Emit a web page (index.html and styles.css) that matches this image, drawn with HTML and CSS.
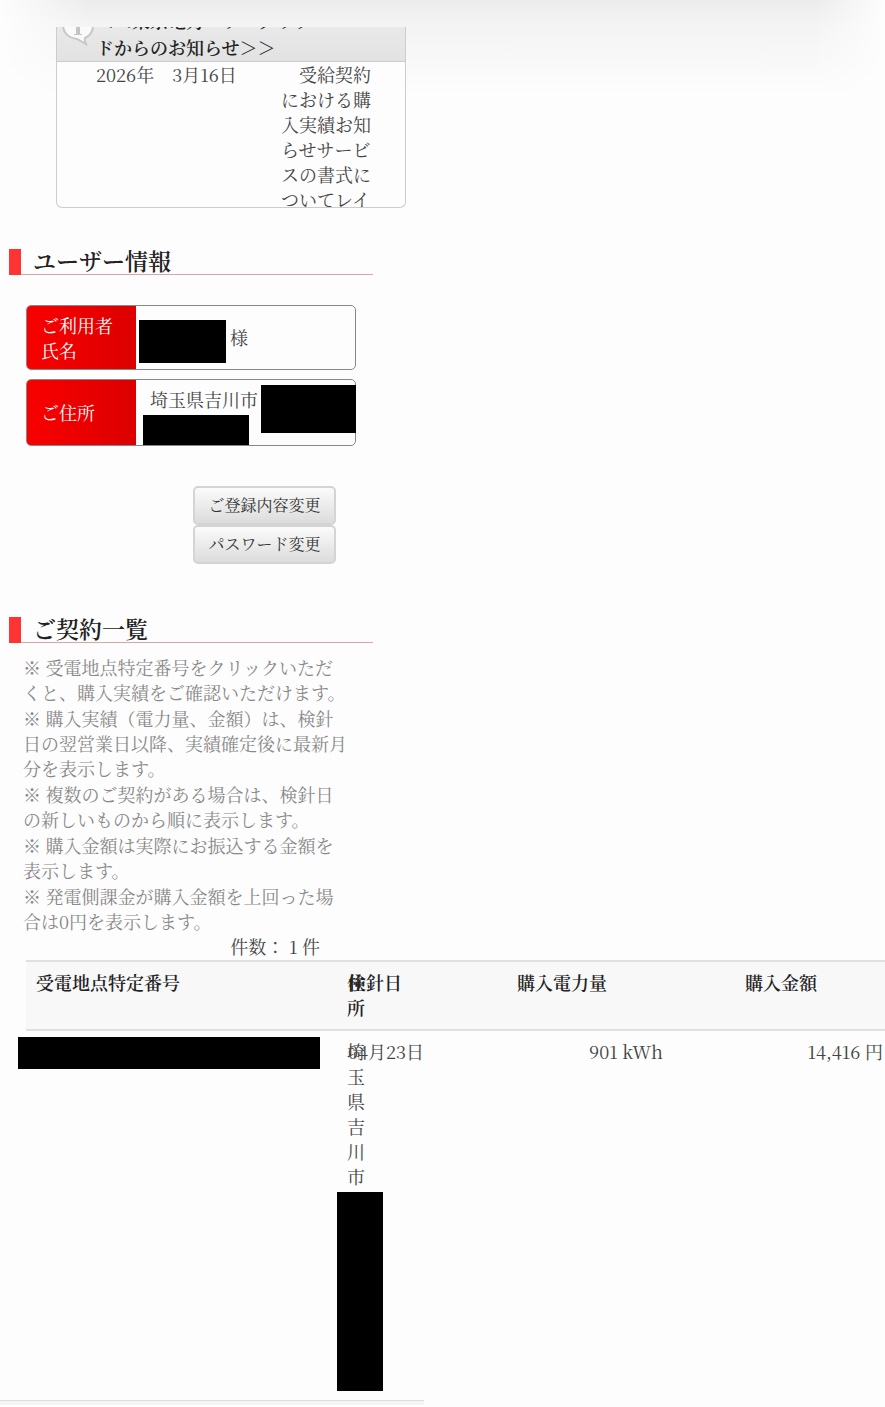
FILE: index.html
```html
<!DOCTYPE html>
<html lang="ja">
<head>
    <meta charset="UTF-8">
    <meta name="viewport" content="width=device-width, initial-scale=1.0">
    <title>購入実績お知らせサービス</title>
    <link rel="stylesheet" href="styles.css">
</head>
<body>
    <main>
        <!-- お知らせ -->
        <section class="notice">
            <div class="notice-head">
                <svg class="notice-icon" width="32" height="40" viewBox="0 0 32 40" aria-hidden="true">
                    <path d="M16 1C8 1 1 8 1 19c0 8 6 13 14 14 3 1 6 4 9 5-1-2-2-4-1-6 5-2 8-7 8-13C31 8 24 1 16 1z" fill="#fafafa" stroke="#c8c8c8" stroke-width="2"/>
                    <path d="M12 15h6v13h2v1h-8v-1h2V17h-2z" fill="#c4c4c4"/>
                    <circle cx="16" cy="10" r="2" fill="#c4c4c4"/>
                </svg>
                <h2>＜＜東京電力パワーグリッ<br>ドからのお知らせ＞＞</h2>
            </div>
            <div class="notice-body">
                <time>2026年　3月16日</time>
                <p>　受給契約における購入実績お知らせサービスの書式についてレイ</p>
            </div>
        </section>

        <!-- ユーザー情報 -->
        <section class="user">
            <h1>ユーザー情報</h1>
            <dl class="user-list">
                <div class="user-row">
                    <dt>ご利用者<br>氏名</dt>
                    <dd class="name"><span class="mask mask-name"></span>様</dd>
                </div>
                <div class="user-row">
                    <dt>ご住所</dt>
                    <dd class="address">埼玉県吉川市<span class="mask mask-town"></span><span class="mask mask-street"></span></dd>
                </div>
            </dl>
            <div class="buttons">
                <button type="button">ご登録内容変更</button>
                <button type="button">パスワード変更</button>
            </div>
        </section>

        <!-- ご契約一覧 -->
        <section class="contracts">
            <h1>ご契約一覧</h1>
            <div class="notes">
                <p>※ 受電地点特定番号をクリックいただ<br>くと、購入実績をご確認いただけます。</p>
                <p>※ 購入実績（電力量、金額）は、検針<br>日の翌営業日以降、実績確定後に最新月<br>分を表示します。</p>
                <p>※ 複数のご契約がある場合は、検針日<br>の新しいものから順に表示します。</p>
                <p>※ 購入金額は実際にお振込する金額を<br>表示します。</p>
                <p>※ 発電側課金が購入金額を上回った場<br>合は0円を表示します。</p>
            </div>
            <p class="count">件数： 1 件</p>
        </section>

        <table class="list">
            <colgroup>
                <col class="col-id">
                <col class="col-place">
                <col class="col-date">
                <col class="col-power">
                <col>
            </colgroup>
            <thead>
                <tr>
                    <th>受電地点特定番号</th>
                    <th class="place"><div>住所</div></th>
                    <th>検針日</th>
                    <th>購入電力量</th>
                    <th>購入金額</th>
                </tr>
            </thead>
            <tbody>
                <tr>
                    <td class="id"><span class="mask mask-id"></span></td>
                    <td class="place"><div>埼玉県吉川市</div><span class="mask mask-place"></span></td>
                    <td>04月23日</td>
                    <td class="power">901 kWh</td>
                    <td class="price">14,416 円</td>
                </tr>
            </tbody>
        </table>
    </main>
    <footer></footer>
</body>
</html>
```
FILE: styles.css
```css
* {
    box-sizing: border-box;
}

body {
    margin: 0;
    padding-top: 27px;
    font-family: "Noto Serif CJK JP", "DejaVu Serif Condensed", "Noto Sans CJK JP", serif;
    font-size: 18px;
    line-height: 25px;
    color: #444;
    overflow-x: hidden;
    background-color: #fdfdfd;
    /* 画面上部の影 */
    background-image:
        linear-gradient(to right, #fdfdfd, transparent 90px, transparent calc(100% - 70px), #fdfdfd),
        linear-gradient(to bottom, #ececec, #f4f4f4 27px, #fdfdfd 95px);
    background-repeat: no-repeat;
}

h1, h2, p, dl, dd {
    margin: 0;
}

.mask {
    display: block;
    background: #000;
}

/* お知らせ */
.notice {
    width: 350px;
    margin-left: 56px;
    border: 1px solid #ccc;
    border-top: none;
    border-radius: 0 0 6px 6px;
    background: #fdfdfd;
}

.notice-head {
    display: flex;
    align-items: flex-end;
    gap: 2px;
    height: 35px;
    padding-left: 5px;
    overflow: hidden;
    background: linear-gradient(#e9e9e9, #e2e2e2);
    border-bottom: 1px solid #ccc;
}

.notice-icon {
    flex: none;
    margin-bottom: 15px;
}

.notice-head h2 {
    font-size: 18px;
    font-weight: 600;
    line-height: 27px;
    white-space: nowrap;
    color: #222;
}

.notice-body {
    display: flex;
    justify-content: space-between;
    height: 145px;
    padding: 0 32px 0 39px;
    overflow: hidden;
}

.notice-body p {
    width: 92px;
    word-break: break-all;
}

/* 見出し */
h1 {
    display: flex;
    width: 364px;
    margin-left: 9px;
    border-bottom: 1px solid #d9a5a5;
    font-size: 23px;
    font-weight: 600;
    line-height: 24px;
    color: #222;
}

h1::before {
    content: "";
    width: 12px;
    height: 26px;
    margin-right: 12px;
    margin-bottom: -1px;
    background: #f33;
}

.user {
    margin-top: 41px;
}

.user-list {
    display: flex;
    flex-direction: column;
    gap: 9px;
    width: 330px;
    margin: 30px 0 0 26px;
}

.user-row {
    display: flex;
    min-height: 65px;
    border: 1px solid #888;
    border-radius: 5px;
}

.user-row dt {
    display: flex;
    align-items: center;
    width: 109px;
    padding-left: 14px;
    border-radius: 4px 0 0 4px;
    background: linear-gradient(to right, #f90000, #dc0000);
    color: #fff;
}

.user-row dd {
    flex: 1;
}

.name {
    display: flex;
    align-items: center;
    gap: 4px;
    padding-left: 3px;
}

.mask-name {
    width: 87px;
    height: 43px;
    margin-top: 7px;
}

.address {
    position: relative;
    padding: 7px 0 33px 14px;
}

.mask-town,
.mask-street {
    position: absolute;
}

.mask-town {
    top: 5px;
    right: -1px;
    width: 95px;
    height: 48px;
}

.mask-street {
    left: 7px;
    bottom: 0;
    width: 106px;
    height: 30px;
}

.buttons {
    display: flex;
    flex-direction: column;
    align-items: flex-end;
    width: 336px;
    margin-top: 40px;
}

button {
    width: 143px;
    height: 39px;
    padding: 0 0 2px;
    border: 2px solid #d4d4d4;
    border-radius: 5px;
    background: linear-gradient(#fbfbfb, #dcdcdc);
    font-family: inherit;
    font-size: 16px;
    color: #333;
}

/* ご契約一覧 */
.contracts {
    margin-top: 53px;
}

.notes {
    display: flex;
    flex-direction: column;
    gap: 1px;
    margin: 12px 0 0 23px;
    color: #888;
}

.count {
    width: 320px;
    text-align: right;
}

.list {
    width: calc(100% - 26px);
    margin: 1px 0 0 26px;
    table-layout: fixed;
    border-collapse: collapse;
}

.col-id {
    width: 311px;
}

.col-place {
    width: 1px;
}

.col-date {
    width: 169px;
}

.col-power {
    width: 228px;
}

.list th,
.list td {
    padding: 8px 2px 9px 10px;
    vertical-align: top;
    text-align: left;
    white-space: nowrap;
}

.list th {
    font-weight: 600;
}

.list thead {
    background: #f8f8f8;
    border-top: 2px solid #e0e0e0;
    border-bottom: 2px solid #e0e0e0;
    color: #222;
}

.list .id {
    padding: 6px 0;
}

.mask-id {
    width: 302px;
    height: 32px;
    margin-left: -8px;
}

/* 幅のない列なので文字は一字ずつ折り返す */
.list .place {
    padding-left: 0;
    padding-right: 0;
    white-space: normal;
}

.place div {
    width: 18px;
    margin-left: 10px;
    word-break: break-all;
}

.mask-place {
    width: 46px;
    height: 199px;
    margin-top: 3px;
}

.list .power {
    padding-right: 72px;
    text-align: right;
}

.list .price {
    text-align: right;
}

footer {
    width: 424px;
    height: 5px;
    background: #f5f5f5;
    border-top: 1px solid #ddd;
}
```
